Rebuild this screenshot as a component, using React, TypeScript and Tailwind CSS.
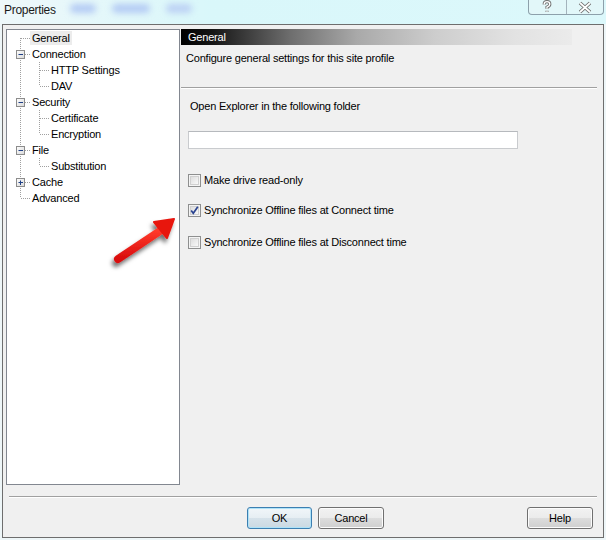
import React, { FunctionComponent } from 'react';

type Link = 'pipe' | 'tee' | 'elbow' | 'first' | 'none';

interface TreeItem {
  label: string;
  level: number;
  links: Link[];
  expander?: '+' | '-';
  selected?: boolean;
}

const treeItems: TreeItem[] = [
  { label: 'General', level: 0, links: ['first'], selected: true },
  { label: 'Connection', level: 0, links: ['tee'], expander: '-' },
  { label: 'HTTP Settings', level: 1, links: ['pipe', 'tee'] },
  { label: 'DAV', level: 1, links: ['pipe', 'elbow'] },
  { label: 'Security', level: 0, links: ['tee'], expander: '-' },
  { label: 'Certificate', level: 1, links: ['pipe', 'tee'] },
  { label: 'Encryption', level: 1, links: ['pipe', 'elbow'] },
  { label: 'File', level: 0, links: ['tee'], expander: '-' },
  { label: 'Substitution', level: 1, links: ['pipe', 'elbow'] },
  { label: 'Cache', level: 0, links: ['tee'], expander: '+' },
  { label: 'Advanced', level: 0, links: ['elbow'] },
];

// one 19px column of the dotted connector lines
const LinkCell: FunctionComponent<{ link: Link; expander?: '+' | '-' }> = ({
  link,
  expander,
}) => {
  const dots = { stroke: '#a0a0a0', strokeWidth: 1, strokeDasharray: '1 1' };
  return (
    <svg width="19" height="16" className="shrink-0">
      {(link === 'pipe' || link === 'tee') && <line x1="9.5" y1="0" x2="9.5" y2="16" {...dots} />}
      {link === 'elbow' && <line x1="9.5" y1="0" x2="9.5" y2="8" {...dots} />}
      {link === 'first' && <line x1="9.5" y1="8" x2="9.5" y2="16" {...dots} />}
      {link !== 'pipe' && link !== 'none' && (
        <line x1="10" y1="8.5" x2="19" y2="8.5" {...dots} />
      )}
      {expander && (
        <g>
          <defs>
            <linearGradient id="exp" x1="0" y1="0" x2="1" y2="1">
              <stop offset="0" stopColor="#ffffff" />
              <stop offset="1" stopColor="#d8d8d8" />
            </linearGradient>
          </defs>
          <rect x="5.5" y="4.5" width="8" height="8" fill="url(#exp)" stroke="#8c8c8c" />
          <line x1="7.5" y1="8.5" x2="12" y2="8.5" stroke="#1e3f86" />
          {expander === '+' && <line x1="9.5" y1="6.5" x2="9.5" y2="11" stroke="#1e3f86" />}
        </g>
      )}
    </svg>
  );
};

const CheckBox: FunctionComponent<{ checked?: boolean }> = ({ checked }) => (
  <svg width="13" height="13" className="shrink-0">
    <defs>
      <linearGradient id="cb" x1="0" y1="0" x2="1" y2="1">
        <stop offset="0" stopColor="#dcdcdc" />
        <stop offset="1" stopColor="#fafafa" />
      </linearGradient>
    </defs>
    <rect x="0.5" y="0.5" width="12" height="12" fill="#f4f4f4" stroke="#8e8f8f" />
    <rect x="2.5" y="2.5" width="8" height="8" fill="url(#cb)" stroke="#d0d0d0" />
    {checked && (
      <path d="M3.2 6.4 L5.3 9.3 L9.8 2.8" fill="none" stroke="#2a4390" strokeWidth="1.7" />
    )}
  </svg>
);

const DialogButton: FunctionComponent<{ label: string; primary?: boolean; className?: string }> = ({
  label,
  primary,
  className,
}) => (
  <button
    className={`h-[22px] rounded-[3px] border text-[11px] leading-[20px] tracking-[-0.2px] text-black ${
      primary
        ? 'border-[#3c7fb1] bg-[linear-gradient(to_bottom,#f1f6f9_0%,#e6eef3_50%,#d6e2ea_51%,#cbd9e2_100%)] shadow-[inset_0_0_0_1px_#aee2f8]'
        : 'border-[#707070] bg-[linear-gradient(to_bottom,#f2f2f2_0%,#ebebeb_50%,#dddddd_51%,#cfcfcf_100%)] shadow-[inset_0_0_0_1px_#fcfcfc]'
    } ${className ?? ''}`}
  >
    {label}
  </button>
);

const App: FunctionComponent = () => {
  return (
    <div className="relative w-[606px] h-[540px] overflow-hidden bg-[#eef6f8] font-['Liberation_Sans',Arial,sans-serif] text-black">
      {/* glass caption */}
      <div className="h-[24px] flex items-start bg-[linear-gradient(to_right,#eef8fa,#d9f7fa_35%,#dcf8fb)]">
        <span className="ml-[4px] mt-[3px] text-[12px] leading-[14px] tracking-[-0.3px] text-[#1a1a1a]">
          Properties
        </span>
        <div className="ml-[14px] mt-[4px] flex gap-[16px] blur-[3px]">
          <div className="w-[26px] h-[9px] rounded-full bg-[#b4cbf4]" />
          <div className="w-[38px] h-[9px] rounded-full bg-[#b4cbf4]" />
          <div className="w-[26px] h-[9px] rounded-full bg-[#bcd1f4]" />
        </div>
        <div className="ml-auto mr-[2px] w-[76px] h-[15px] flex rounded-b-[4px] border border-t-0 border-[#8da0ab] bg-[#e6f6f9]/60">
          <div className="flex-1 flex items-center justify-center border-r border-[#a3b3bc]">
            <svg width="12" height="14" viewBox="0 0 12 14">
              <path
                d="M3.2 4.4 Q3.2 1.6 6 1.6 Q8.8 1.6 8.8 4.2 Q8.8 5.8 6 7.2 L6 8.8 M6 10.8 L6 11.8"
                fill="none"
                stroke="#6f6f6f"
                strokeWidth="3.2"
              />
              <path
                d="M3.2 4.4 Q3.2 1.6 6 1.6 Q8.8 1.6 8.8 4.2 Q8.8 5.8 6 7.2 L6 8.8 M6 10.8 L6 11.8"
                fill="none"
                stroke="#ffffff"
                strokeWidth="1.4"
              />
            </svg>
          </div>
          <div className="flex-1 flex items-center justify-center">
            <svg width="16" height="13" viewBox="0 0 16 13">
              <path d="M3 2 L13 11 M13 2 L3 11" stroke="#6f6f6f" strokeWidth="3.6" />
              <path d="M3 2 L13 11 M13 2 L3 11" stroke="#ffffff" strokeWidth="1.7" />
            </svg>
          </div>
        </div>
      </div>

      {/* dialog body */}
      <div className="ml-[2px] w-[602px] h-[514px] border border-[#6e6e6e] bg-[#f0f0f0] flex flex-col text-[11px] tracking-[-0.2px]">
        <div className="flex mt-[4px] ml-[3px]">
          <div className="w-[174px] h-[456px] border border-[#828790] bg-white pl-[4px]">
            {treeItems.map((item) => (
              <div key={item.label} className="h-[16px] flex items-center">
                {item.links.map((link, i) => (
                  <LinkCell
                    key={i}
                    link={link}
                    expander={i === item.level ? item.expander : undefined}
                  />
                ))}
                <span
                  className={`px-[2px] leading-[14px] ${item.selected ? 'bg-[#ececec]' : ''}`}
                >
                  {item.label}
                </span>
              </div>
            ))}
          </div>

          <div className="ml-[1px] w-[416px] flex flex-col">
            <div className="h-[16px] w-[391px] pl-[7px] leading-[16px] text-white bg-[linear-gradient(to_right,#000000_0%,#151515_8%,#6e6e6e_28%,#a9a9a9_45%,#cdcdcd_65%,#e2e2e2_85%,#ebebeb_100%)]">
              General
            </div>
            <p className="mt-[6px] pl-[5px] leading-[14px]">
              Configure general settings for this site profile
            </p>
            <div className="mt-[22px] h-px bg-[#a0a0a0] shadow-[0_1px_0_#ffffff]" />
            <p className="mt-[11px] pl-[9px] leading-[14px]">Open Explorer in the following folder</p>
            <input
              className="mt-[18px] ml-[7px] w-[330px] h-[18px] bg-white border border-[#c9cbce] border-t-[#b6b9bd] outline-none"
              defaultValue=""
            />
            <label className="mt-[24px] ml-[7px] h-[14px] flex items-center gap-[3px]">
              <CheckBox />
              <span className="leading-[14px]">Make drive read-only</span>
            </label>
            <label className="mt-[16px] ml-[7px] h-[14px] flex items-center gap-[3px]">
              <CheckBox checked />
              <span className="leading-[14px]">Synchronize Offline files at Connect time</span>
            </label>
            <label className="mt-[18px] ml-[7px] h-[14px] flex items-center gap-[3px]">
              <CheckBox />
              <span className="leading-[14px]">Synchronize Offline files at Disconnect time</span>
            </label>
          </div>
        </div>

        <div className="mt-[11px] ml-[6px] w-[588px] h-px bg-[#a0a0a0] shadow-[0_1px_0_#ffffff]" />

        <div className="mt-[10px] flex">
          <DialogButton label="OK" primary className="ml-[244px] w-[65px]" />
          <DialogButton label="Cancel" className="ml-[6px] w-[66px]" />
          <DialogButton label="Help" className="ml-auto mr-[10px] w-[66px]" />
        </div>
      </div>

      {/* red pointer arrow over the tree */}
      <svg className="absolute left-[100px] top-[205px]" width="90" height="70" viewBox="100 205 90 70">
        <defs>
          <filter id="drop" x="-30%" y="-30%" width="160%" height="170%">
            <feDropShadow dx="-2" dy="4" stdDeviation="2.2" floodColor="#000" floodOpacity="0.55" />
          </filter>
          <linearGradient id="red" x1="0" y1="0" x2="0" y2="1">
            <stop offset="0" stopColor="#ff3a2a" />
            <stop offset="1" stopColor="#d90c0c" />
          </linearGradient>
        </defs>
        <g filter="url(#drop)">
          <line x1="118" y1="259" x2="160" y2="231" stroke="url(#red)" strokeWidth="8" strokeLinecap="round" />
          <polygon points="174,219 154,222 167,238" fill="#e8140f" stroke="#e8140f" strokeWidth="2" strokeLinejoin="round" />
        </g>
      </svg>
    </div>
  );
};

export default App;
